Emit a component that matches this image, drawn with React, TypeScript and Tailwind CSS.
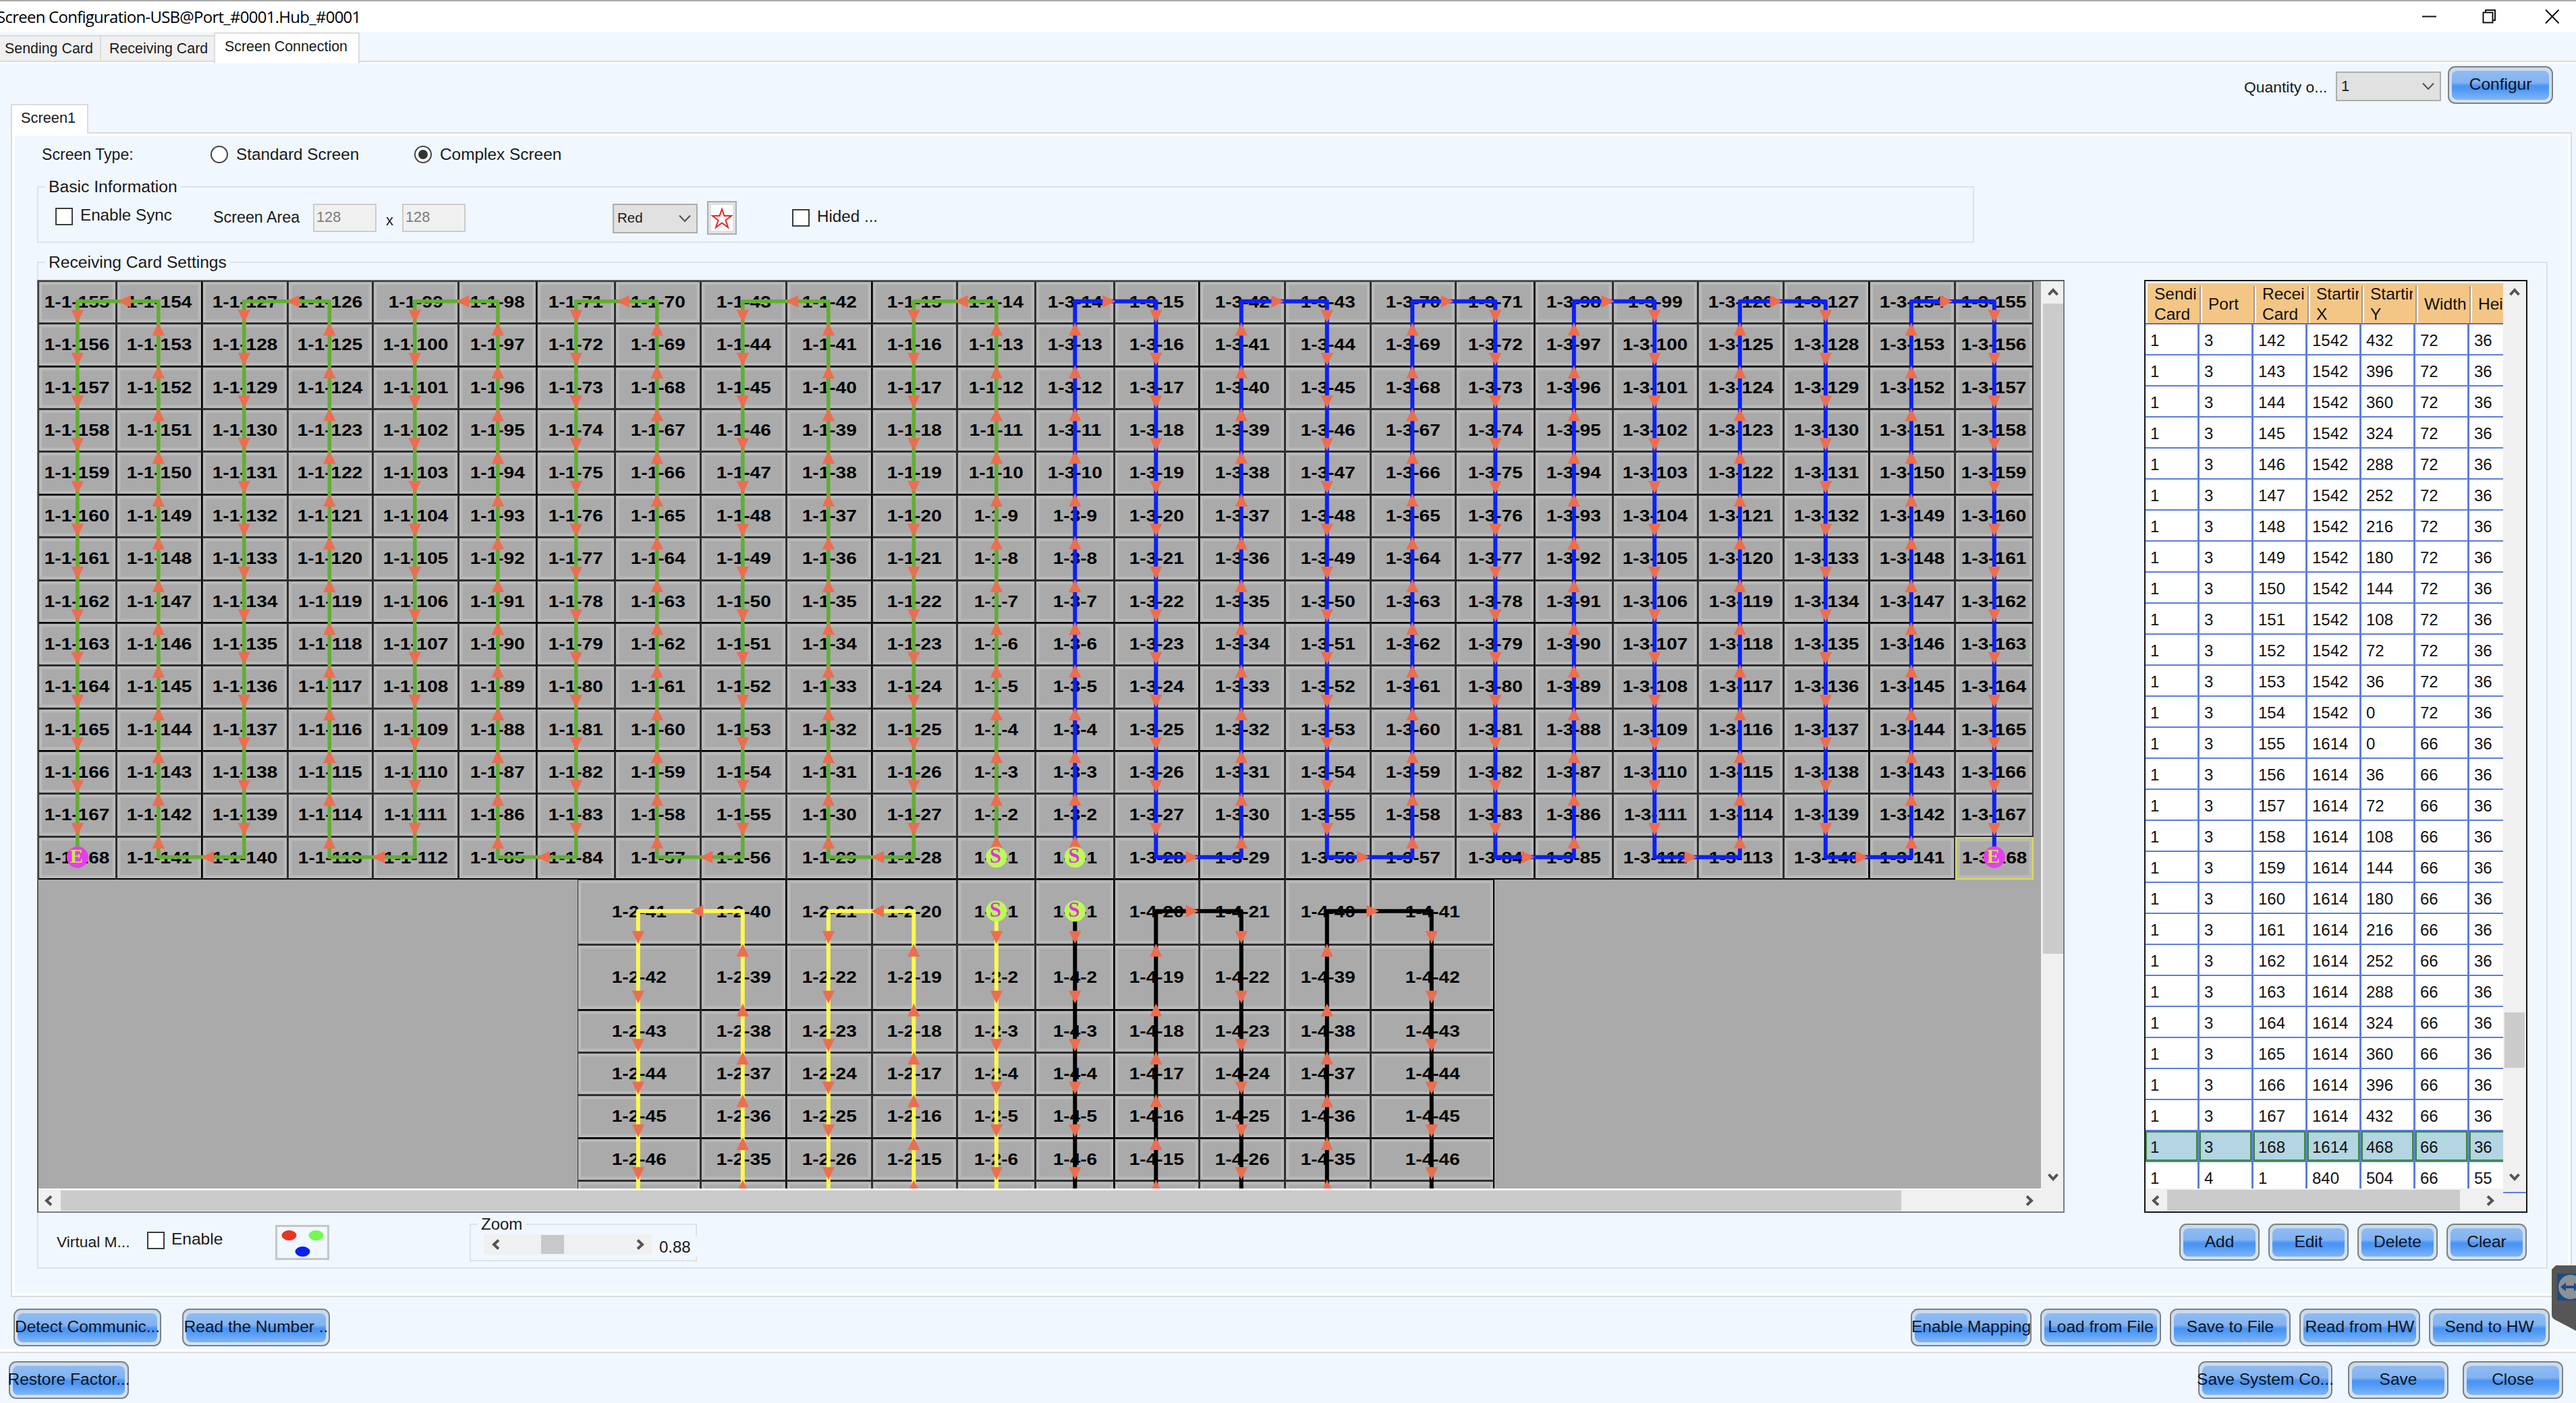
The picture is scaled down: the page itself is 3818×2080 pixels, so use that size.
import React from "react";

const SCALE = 1.76;
const VIEW_H = 1345;
const px = (u: number) => Math.round(u * SCALE);

type Block = {
  x: number;
  y: number;
  cols: number[];
  rows: number[];
  ports: { port: number; order: number[]; up: boolean; color: string; width: number }[];
};

const UPPER: Block = {
  x: 0,
  y: 0,
  cols: [66, 72, 72, 72, 72, 66, 66, 72, 72, 72, 72, 66, 66, 72, 72, 72, 72, 66, 66, 72, 72, 72, 72, 66],
  rows: Array(14).fill(36),
  ports: [
    { port: 1, order: [11, 10, 9, 8, 7, 6, 5, 4, 3, 2, 1, 0], up: true, color: "#62ae33", width: 5.6 },
    { port: 3, order: [12, 13, 14, 15, 16, 17, 18, 19, 20, 21, 22, 23], up: true, color: "#0b20f5", width: 6 },
  ],
};

const LOWER: Block = {
  x: 454,
  y: 504,
  cols: [104, 72, 72, 72, 66, 66, 72, 72, 72, 104],
  rows: [55, 55, 36, 36, 36, 36, 36, 36, 36, 36],
  ports: [
    { port: 2, order: [4, 3, 2, 1, 0], up: false, color: "#fdf84f", width: 6 },
    { port: 4, order: [5, 6, 7, 8, 9], up: false, color: "#000000", width: 6 },
  ],
};

const edges = (start: number, sizes: number[]) => {
  const out = [start];
  sizes.forEach((s) => out.push(out[out.length - 1] + s));
  return out.map(px);
};

type Pt = { x: number; y: number };

function buildBlock(b: Block) {
  const xs = edges(b.x, b.cols);
  const ys = edges(b.y, b.rows);
  const labels: string[][] = b.rows.map(() => b.cols.map(() => ""));
  const chains = b.ports.map((p) => {
    const pts: Pt[] = [];
    let n = 1;
    p.order.forEach((c, i) => {
      const up = i % 2 === 0 ? p.up : !p.up;
      const nudge = b.cols[c] === 66 ? 0.2 : 1.7;
      for (let k = 0; k < b.rows.length; k++) {
        const r = up ? b.rows.length - 1 - k : k;
        labels[r][c] = `1-${p.port}-${n++}`;
        pts.push({ x: (xs[c] + xs[c + 1]) / 2 - nudge, y: (ys[r] + ys[r + 1]) / 2 - 1.7 });
      }
    });
    return { ...p, pts };
  });
  return { xs, ys, labels, chains };
}

const upper = buildBlock(UPPER);
const lower = buildBlock(LOWER);

function arrow(a: Pt, b: Pt) {
  const mx = (a.x + b.x) / 2;
  const my = (a.y + b.y) / 2;
  const dx = Math.sign(Math.round(b.x - a.x));
  const dy = Math.sign(Math.round(b.y - a.y));
  const bx = mx - dx * 19;
  const by = my - dy * 19;
  return `M${mx} ${my}L${bx + dy * 9.2} ${by + dx * 9.2}L${bx - dy * 9.2} ${by - dx * 9.2}Z`;
}

function CellGrid({ data, selected }: { data: ReturnType<typeof buildBlock>; selected?: string }) {
  const { xs, ys, labels } = data;
  const shown = labels.filter((_, r) => ys[r] < VIEW_H);
  return (
    <div
      className="absolute grid"
      style={{
        left: xs[0],
        top: ys[0],
        gridTemplateColumns: xs.slice(1).map((x, i) => `${x - xs[i]}px`).join(" "),
        gridTemplateRows: shown.map((_, i) => `${ys[i + 1] - ys[i]}px`).join(" "),
      }}
    >
      {shown.flatMap((row, r) =>
        row.map((t, c) => (
          <div
            key={`${r}-${c}`}
            className={
              "flex items-center justify-center border-t border-l border-r-2 border-b-2 " +
              (t === selected
                ? "border-t-2 border-l-2 border-[#dede4e] "
                : "border-[#2f2f2f] " + (r % 3 === 1 ? "border-b-black " : "") + (c % 4 === 1 ? "border-r-black " : "")) +
              "shadow-[inset_0_0_0_4px_#b9b9b9,inset_0_0_0_5px_#b0b0b0]"
            }
          >
            {ys[r] + 30 < VIEW_H && (
              <span className="scale-x-[1.15] text-[24.4px] leading-none font-bold whitespace-nowrap text-black">{t}</span>
            )}
          </div>
        )),
      )}
    </div>
  );
}

function Badge({ p, letter }: { p: Pt; letter: "S" | "E" }) {
  const start = letter === "S";
  return (
    <g>
      <circle cx={p.x} cy={p.y} r={start ? 15.6 : 16} fill={start ? "#bbfb55" : "#e93cf2"} />
      <text
        x={p.x - 1.5}
        y={p.y + 8.5}
        textAnchor="middle"
        className={"font-['Liberation_Serif',serif] font-bold " + (start ? "text-[31px]" : "text-[29px]")}
        fill={start ? "#e032e6" : "#c4ee45"}
      >
        {letter}
      </text>
    </g>
  );
}

function Wiring() {
  const chains = [...upper.chains, ...lower.chains];
  return (
    <svg className="absolute top-0 left-0" width="2967" height="1345">
      {chains.map((c) => (
        <polyline
          key={c.port}
          points={c.pts.map((p) => `${p.x},${p.y}`).join(" ")}
          fill="none"
          stroke={c.color}
          strokeWidth={c.width}
          strokeLinejoin="round"
        />
      ))}
      {chains.map((c) => (
        <path key={c.port} d={c.pts.slice(1).map((p, i) => arrow(c.pts[i], p)).join("")} fill="#ec6d4f" />
      ))}
      {chains.map((c) => (
        <Badge key={c.port} p={c.pts[0]} letter="S" />
      ))}
      {upper.chains.map((c) => (
        <Badge key={c.port} p={c.pts[c.pts.length - 1]} letter="E" />
      ))}
    </svg>
  );
}

const ROTATE = { up: "rotate-0", right: "rotate-90", down: "rotate-180", left: "-rotate-90" };

function ScrollArrow({ dir }: { dir: keyof typeof ROTATE }) {
  return (
    <svg width="16" height="16" viewBox="0 0 16 16" className={"shrink-0 " + ROTATE[dir]}>
      <path d="M1.5 12L8 5L14.5 12" fill="none" stroke="#555" strokeWidth="4" />
    </svg>
  );
}

function Chevron() {
  return (
    <svg width="18" height="12" viewBox="0 0 18 12" className="shrink-0">
      <path d="M1 1.5L9 10L17 1.5" fill="none" stroke="#555" strokeWidth="2.2" />
    </svg>
  );
}

function Btn({ w, children, h = "h-[55px]" }: { w: string; h?: string; children: React.ReactNode }) {
  return (
    <button
      className={
        "flex shrink-0 rounded-[11px] border-[2.5px] border-[#7d8184] bg-linear-to-b from-[#c9daee] to-[#d3e3f3] p-[4px] pt-[5px] " + h + " " + w
      }
    >
      <span className="flex h-full w-full items-center justify-center rounded-[8px] bg-[linear-gradient(to_bottom,#8fbbf2_0%,#83b3f0_40%,#4993f5_52%,#4f99f6_65%,#82b6f4_100%)] text-[24.5px] leading-none whitespace-nowrap text-[#0c1420]">
        <span className="pb-[2px]">{children}</span>
      </span>
    </button>
  );
}

const Check = () => <span className="size-[26px] shrink-0 border-[2.5px] border-[#3c3c3c] bg-white" />;

const Radio = ({ on }: { on?: boolean }) => (
  <span className="flex size-[26px] shrink-0 items-center justify-center rounded-full border-2 border-[#444] bg-white">
    {on && <span className="size-[14px] rounded-full bg-[#333]" />}
  </span>
);

const Legend = ({ children, cls }: { children: React.ReactNode; cls: string }) => (
  <span className={"absolute bg-[#f0f7fe] px-[5px] leading-none whitespace-nowrap " + cls}>{children}</span>
);

const tableRows: (number | string)[][] = [];
for (let i = 142; i <= 154; i++) tableRows.push([1, 3, i, 1542, (154 - i) * 36, 72, 36]);
for (let i = 155; i <= 168; i++) tableRows.push([1, 3, i, 1614, (i - 155) * 36, 66, 36]);
tableRows.push([1, 4, 1, 840, 504, 66, 55]);

const heads = ["Sendi Card", "Port", "Recei Card", "Startir X", "Startir Y", "Width", "Hei"];

function CardTable() {
  return (
    <div className="flex h-[1383px] w-[568px] border-[2.5px] border-[#151515] bg-[#f0f0f0]">
      <div className="flex w-[530px] flex-col">
        <div className="h-[1345px] overflow-hidden bg-white">
          <div className="flex h-[64px] overflow-hidden border-b-2 border-[#4d70dd] pt-[3px] pl-[3px]">
            {heads.map((h, i) => (
              <div
                key={i}
                className={
                  "flex h-[60px] shrink-0 items-center overflow-hidden bg-[#f4c685] pt-[2px] text-[24.5px] leading-[30px] text-[#111] " +
                  (i === 0 ? "w-[81px] pl-[10px]" : "w-[80px] pl-[9px]")
                }
              >
                <div className="w-[63px] shrink-0 overflow-hidden">
                  {h.split(" ").map((l) => (
                    <div key={l} className="whitespace-nowrap">
                      {l}
                    </div>
                  ))}
                </div>
                <div className="ml-auto h-[55px] w-[4px] shrink-0 border-l-2 border-[#9b9b9b] bg-white" />
              </div>
            ))}
          </div>
          {tableRows.map((row) => {
            const sel = row[2] === 168;
            return (
              <div key={`${row[1]}-${row[2]}`} className="flex h-[46px] border-b-2 border-[#5b7ce0]">
                {row.map((v, i) => (
                  <div
                    key={i}
                    className={
                      "flex w-[80px] shrink-0 items-center border-r-[3px] border-[#5f7ddb] pt-[3px] text-[24px] leading-none text-[#111] " +
                      (sel ? "bg-[#b4d5e2] shadow-[inset_0_0_0_2px_#3b8a35]" : "bg-white")
                    }
                  >
                    <span className="pl-[7px]">{v}</span>
                  </div>
                ))}
              </div>
            );
          })}
        </div>
        <div className="mt-[1px] flex flex-1 items-center bg-[#f0f0f0] pl-[7px]">
          <ScrollArrow dir="left" />
          <div className="ml-[9px] h-[31px] w-[434px] bg-[#cbcbcb]" />
          <span className="ml-[37px] flex">
            <ScrollArrow dir="right" />
          </span>
        </div>
      </div>
      <div className="flex flex-1 flex-col items-center pt-[8px]">
        <ScrollArrow dir="up" />
        <div className="mt-[1060px] h-[82px] w-[30px] bg-[#cbcbcb]" />
        <span className="mt-[154px]">
          <ScrollArrow dir="down" />
        </span>
        <div className="mt-[14px] h-[2px] w-full bg-[#5b7ce0]" />
      </div>
    </div>
  );
}

function CanvasPanel() {
  return (
    <div className="flex h-[1383px] w-[3005px] border-2 border-[#7b7d7d] border-t-[#555858] border-l-[#555858] bg-[#f0f0f0]">
      <div className="flex w-[2970px] flex-col">
        <div className="relative h-[1345px] w-[2968px] overflow-hidden bg-[#aaaaaa]">
          <CellGrid data={upper} selected="1-3-168" />
          <CellGrid data={lower} />
          <Wiring />
        </div>
        <div className="flex flex-1 items-center border-t-2 border-white pl-[7px]">
          <ScrollArrow dir="left" />
          <div className="ml-[10px] h-[30px] w-[2728px] bg-[#cbcbcb]" />
          <span className="ml-[182px] flex">
            <ScrollArrow dir="right" />
          </span>
        </div>
      </div>
      <div className="flex flex-1 flex-col items-center pt-[8px]">
        <ScrollArrow dir="up" />
        <div className="mt-[9px] h-[964px] w-[30px] bg-[#cbcbcb]" />
        <span className="mt-[323px]">
          <ScrollArrow dir="down" />
        </span>
      </div>
    </div>
  );
}

export default function App() {
  return (
    <div className="relative h-[2080px] w-[3818px] overflow-hidden bg-[#f0f7fe] font-['Liberation_Sans',Arial,sans-serif] text-[24px] text-[#1a1a1a]">
      {/* Title bar */}
      <header className="flex h-[48px] items-center border-t-2 border-[#a9a9a9] bg-white">
        <span className="-ml-[5px] font-['Open_Sans','Noto_Sans',sans-serif] text-[24px] leading-none tracking-[-0.75px] whitespace-nowrap text-black">
          Screen Configuration-USB@Port_#0001.Hub_#0001
        </span>
        <svg className="mr-[24px] mb-[2px] ml-auto" width="206" height="24" viewBox="0 0 206 24" fill="none" stroke="#111" strokeWidth="2">
          <path d="M2 12.5H23" />
          <path d="M92.5 6.5h14v15h-14zM96 6V3h14v15h-3.5" />
          <path d="M185 2.5L204.500 22.500M204.500 2.500L185 22.500" />
        </svg>
      </header>

      {/* Main tabs */}
      <nav className="flex h-[42px] items-end text-[21.4px] leading-none whitespace-nowrap">
        <div className="flex h-[38px] w-[150px] items-center border-t-2 border-r-2 border-[#dcdcdc] bg-[#f0f0f0] pt-[2px] pl-[7px]">Sending Card</div>
        <div className="flex h-[38px] w-[167px] items-center border-t-2 border-[#dcdcdc] bg-[#f0f0f0] pt-[2px] pl-[12px]">Receiving Card</div>
        <div className="z-10 -mb-[4px] flex h-[46px] w-[216px] items-center border-x-2 border-t-2 border-[#dcdcdc] bg-white pb-[4px] pl-[14px]">
          Screen Connection
        </div>
      </nav>

      <main className="h-[1910px] border-t-2 border-[#d9dbdd]">
        <div className="flex h-[62px] border-t-2 border-white">
          <span className="mt-[23px] ml-[3326px] w-[136px] text-[22.9px] leading-[25px] whitespace-nowrap">Quantity o...</span>
          <div className="mt-[12px] flex h-[44px] w-[156px] items-center justify-between border-2 border-[#adadad] bg-[#e1e1e1] pr-[8px] pl-[6px] text-[22px] leading-none">
            1
            <Chevron />
          </div>
          <div className="mt-[4px] ml-[10px]">
            <Btn w="w-[156px]" h="h-[56px]">
              Configur
            </Btn>
          </div>
        </div>

        {/* Screen tab */}
        <div className="relative z-10 -mb-[2px] ml-[16px] flex h-[44px] w-[115px] items-center border-x-2 border-t-2 border-[#dcdcdc] bg-white pb-[4px] pl-[13px] text-[21.8px] leading-none">
          Screen1
        </div>

        <section className="ml-[16px] h-[1727px] w-[3796px] border-2 border-[#d9dbdd] shadow-[inset_0_0_0_4px_#fcfdff]">
          <div className="flex h-[62px] items-center">
            <span className="ml-[44px] w-[250px] text-[23.1px]">Screen Type:</span>
            <Radio />
            <span className="ml-[12px] w-[264px] text-[24.3px]">Standard Screen</span>
            <Radio on />
            <span className="ml-[12px] text-[24.4px]">Complex Screen</span>
          </div>

          {/* Basic information */}
          <div className="relative mt-[16px] ml-[37px] flex h-[84px] w-[2871px] items-center border-2 border-[#dde2e6] pt-[9px] whitespace-nowrap">
            <Legend cls="left-[10px] -top-[13px] text-[24.700px]">Basic Information</Legend>
            <span className="mb-[4px] ml-[25px] flex">
              <Check />
            </span>
            <span className="mb-[7px] ml-[11px] w-[197px] text-[24.2px]">Enable Sync</span>
            <span className="w-[148px] text-[23.3px]">Screen Area</span>
            <div className="flex h-[42px] w-[94px] items-center border-2 border-[#cccccc] bg-[#f0f0f0] pl-[3px] text-[21.8px] text-[#7d7d7d]">128</div>
            <span className="mt-[8px] ml-[14px] w-[24px] text-[22px]">x</span>
            <div className="flex h-[42px] w-[94px] items-center border-2 border-[#cccccc] bg-[#f0f0f0] pl-[3px] text-[21.8px] text-[#7d7d7d]">128</div>
            <div className="mt-[2px] ml-[218px] flex h-[44px] w-[126px] items-center justify-between border-2 border-[#adadad] bg-[#e1e1e1] pr-[8px] pl-[5px] text-[20.500px]">
              Red
              <Chevron />
            </div>
            <div className="ml-[14px] flex h-[50px] w-[44px] items-center justify-center border-2 border-[#adadad] bg-[#e1e1e1]">
              <svg width="36" height="42" viewBox="0 0 36 42">
                <rect x="2" y="2" width="32" height="38" fill="#fff" />
                <path d="M18 8L21.500 18H32L23.500 24.500L27 35L18 28.500L9 35L12.500 24.500L4 18H14.500Z" fill="none" stroke="#ee2222" strokeWidth="2" />
              </svg>
            </div>
            <span className="ml-[82px] flex">
              <Check />
            </span>
            <span className="mb-[3px] ml-[11px] text-[24.2px]">Hided ...</span>
          </div>

          {/* Receiving cards */}
          <div className="relative mt-[28px] ml-[37px] h-[1493px] w-[3721px] border-2 border-[#dde2e6]">
            <Legend cls="left-[10px] -top-[13px] text-[24.600px]">Receiving Card Settings</Legend>
            <div className="mt-[25px] -ml-[2px] flex gap-[118px]">
              <CanvasPanel />
              <CardTable />
            </div>
            <div className="flex h-[81px] items-start whitespace-nowrap">
              <span className="mt-[29px] ml-[27px] w-[134px] text-[22.8px] leading-[28px]">Virtual M...</span>
              <span className="mt-[28px] flex">
                <Check />
              </span>
              <span className="mt-[25px] ml-[10px] w-[154px] text-[24.5px] leading-[28px]">Enable</span>
              <div className="mt-[18px] flex h-[52px] w-[80px] items-center justify-center border-[3px] border-[#c3c6c8] bg-[#f0f7fe]">
                <svg width="72" height="44" viewBox="0 0 72 44">
                  <ellipse cx="16.500" cy="11.500" rx="11" ry="7.500" fill="#ea3423" />
                  <ellipse cx="56.500" cy="11.500" rx="11" ry="7.500" fill="#75f94c" />
                  <ellipse cx="36.500" cy="35.500" rx="11" ry="7.500" fill="#0b20f5" />
                </svg>
              </div>
              <div className="relative mt-[16px] ml-[208px] flex h-[56px] w-[337px] border-2 border-[#dde2e6]">
                <Legend cls="left-[10px] -top-[13px] text-[24px]">Zoom</Legend>
                <div className="mt-[14px] ml-[20px] flex h-[30px] w-[248px] items-center bg-[#f0f0f0] px-[9px]">
                  <ScrollArrow dir="left" />
                  <div className="ml-[59px] h-[28px] w-[34px] bg-[#c8c8c8]" />
                  <span className="ml-auto flex">
                    <ScrollArrow dir="right" />
                  </span>
                </div>
                <span className="mt-[17px] -mr-[4px] ml-[5px] h-[30px] w-[62px] shrink-0 bg-[#f0f7fe] pl-[6px] text-[24px] leading-[32px]">0.88</span>
              </div>
              <div className="mt-[16px] ml-auto flex gap-[13px] pr-[29px]">
                <Btn w="w-[119px]">Add</Btn>
                <Btn w="w-[119px]">Edit</Btn>
                <Btn w="w-[119px]">Delete</Btn>
                <Btn w="w-[119px]">Clear</Btn>
              </div>
            </div>
          </div>
        </section>

        <div className="mt-[17px] flex pr-[39px] pl-[20px]">
          <Btn w="w-[219px]" h="h-[56px]">
            Detect Communic...
          </Btn>
          <span className="w-[31px]" />
          <Btn w="w-[219px]" h="h-[56px]">
            Read the Number ..
          </Btn>
          <div className="ml-auto flex gap-[13px]">
            <Btn w="w-[179px]" h="h-[56px]">Enable Mapping</Btn>
            <Btn w="w-[179px]" h="h-[56px]">Load from File</Btn>
            <Btn w="w-[179px]" h="h-[56px]">Save to File</Btn>
            <Btn w="w-[179px]" h="h-[56px]">Read from HW</Btn>
            <Btn w="w-[179px]" h="h-[56px]">Send to HW</Btn>
          </div>
        </div>
      </main>

      <footer className="flex h-[80px] border-t-4 border-white">
        <div className="flex flex-1 border-t-2 border-[#dcdddf] pt-[12px] pr-[19px] pl-[13px]">
          <Btn w="w-[178px]" h="h-[56px]">
            Restore Factor...
          </Btn>
          <div className="ml-auto flex">
            <Btn w="w-[199px]" h="h-[56px]">
              Save System Co...
            </Btn>
            <span className="w-[23px]" />
            <Btn w="w-[149px]" h="h-[56px]">
              Save
            </Btn>
            <span className="w-[21px]" />
            <Btn w="w-[149px]" h="h-[56px]">
              Close
            </Btn>
          </div>
        </div>
      </footer>

      {/* Remote-session flyout on the right edge */}
      <svg className="absolute top-[1876px] right-0" width="36" height="98" viewBox="0 0 36 98">
        <path d="M0 6L6 0H36V97L4 80Q0 78 0 73Z" fill="#565656" />
        <rect x="8" y="12" width="28" height="40" fill="#1c4e80" />
        <circle cx="28" cy="32" r="18" fill="#8d9299" />
        <path d="M13 32L21 25.500V30H33V25.500L41 32L33 38.500V34H21V38.500Z" fill="#1c4e80" />
      </svg>
    </div>
  );
}
